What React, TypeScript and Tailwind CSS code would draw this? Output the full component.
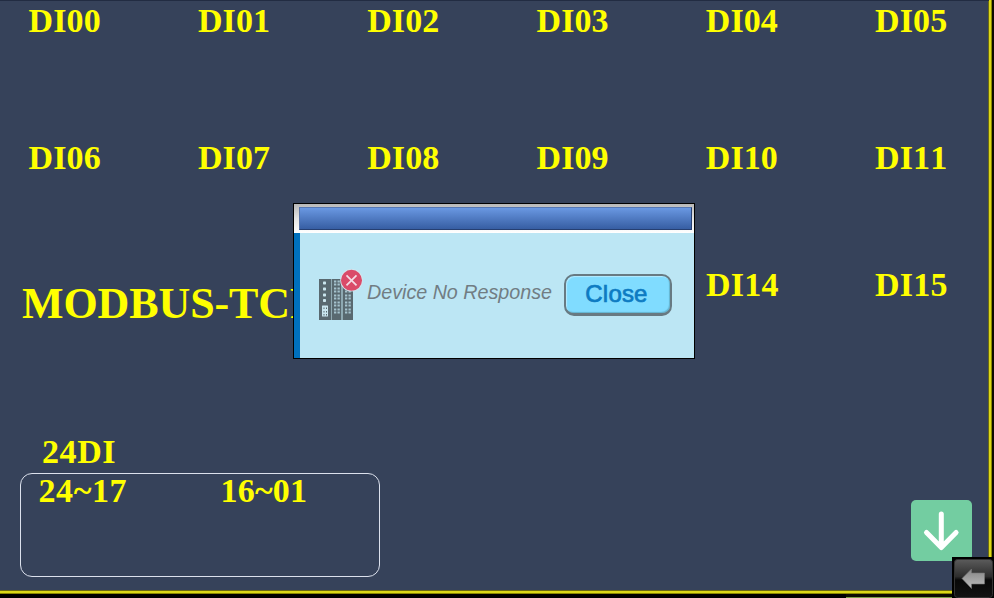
const serif = "font-['Liberation_Serif',serif] font-bold text-[#ffff00] whitespace-nowrap [font-kerning:none]";

function Label({ text, className = '' }: { text: string; className?: string }) {
  return <div className={`${serif} text-[34px] leading-[34px] ${className}`}>{text}</div>;
}

function LabelRow({ labels }: { labels: string[] }) {
  return (
    <div className="grid grid-cols-[repeat(6,169.3px)] pl-[28.6px] h-[34px] tracking-[0.1px]">
      {labels.map((label) => (
        <Label key={label} text={label} />
      ))}
    </div>
  );
}

function DeviceIcon() {
  const rows = [0, 1, 2, 3, 4];
  return (
    <svg width="46" height="54" viewBox="0 0 46 54" className="shrink-0">
      <path d="M2 11h12v41H2zM15 11h9.5v41H15zM26 11h10v41H26z" fill="#596970" />
      <path d="M14 11h1v41h-1zM24.5 11h1.5v41h-1.5z" fill="#8fa9b2" />
      {[13.5, 19.5, 25.5, 31].map((y) => (
        <rect key={y} x="6" y={y} width="3" height="3" rx=".7" fill="#cbe6ee" />
      ))}
      <rect x="5" y="37.500" width="6" height="11" rx=".5" fill="#c9e6ef" />
      <path d="M6.500 39.500h1v1.500h-1zM9 39.500h1v1.500H9zM6.500 43h1v1.500h-1zM9 43h1v1.500H9zM6.500 46h1v1.500h-1zM9 46h1v1.500H9z" fill="#596970" />
      {rows.map((r) => (
        <path
          key={r}
          d={`M17 ${12.5 + r * 7}h2.300v5h-2.300zM20.500 ${12.5 + r * 7}h2.300v5h-2.300zM28 ${12.5 + r * 7}h2.300v5h-2.300zM31.500 ${12.5 + r * 7}h2.300v5h-2.300z`}
          fill="#a6c3ce"
        />
      ))}
      {rows.map((r) => (
        <path key={r} d={`M17 ${14.500 + r * 7}h6v1h-6zM28 ${14.500 + r * 7}h6v1h-6z`} fill="#596970" />
      ))}
      <circle cx="34.500" cy="12.300" r="11.300" fill="#d5e5ed" />
      <circle cx="34.500" cy="12.300" r="10.500" fill="#da4b69" />
      <path d="M29.500 7.300l10 10M39.500 7.300l-10 10" stroke="#f4dce5" strokeWidth="1.700" />
    </svg>
  );
}

function Dialog() {
  return (
    <div className="absolute left-[293px] top-[203px] w-[402px] h-[156px] border border-black bg-white flex flex-col">
      <div className="h-[29px] pt-[3px] pl-[5px] pr-[2px] pb-[3px] bg-linear-to-b from-[#b8b8b8] via-[#e4e4e4] to-white">
        <div className="h-[23px] bg-linear-to-b from-[#6a98e2] to-[#375ea3] border border-t-[#5578b5] border-l-[#5874aa] border-b-[#263f72] border-r-[#263f72]" />
      </div>
      <div className="flex-1 bg-[#bce6f4] border-l-6 border-[#0070bd] flex items-start">
        <div className="pt-[35px] pl-[17px]">
          <DeviceIcon />
        </div>
        <div className="mt-[47px] ml-[4px] w-[197px] font-['Liberation_Sans',sans-serif] italic text-[19.700px] leading-[24px] text-[#717d83] whitespace-nowrap">
          Device No Response
        </div>
        <button className="mt-[41px] w-[108px] h-[42px] rounded-[10px] border-2 border-[#687a82] border-b-3 bg-[#80dcff] shadow-[inset_1px_1px_1px_#b4eaff,inset_-1px_-1px_1px_#63b4d0] pr-[3px] pb-[2px] font-['Liberation_Sans',sans-serif] text-[24px] leading-[34px] tracking-[0.2px] text-[#0d7bc2] [-webkit-text-stroke:0.700px_#0d7bc2]">
          Close
        </button>
      </div>
    </div>
  );
}

function ScrollDownButton() {
  return (
    <button className="absolute left-[911px] top-[500px] w-[61px] h-[61px] rounded-[5px] bg-[#73cda1]">
      <svg width="61" height="61" viewBox="0 0 61 61" fill="none" stroke="white" strokeWidth="5" strokeLinecap="round" strokeLinejoin="round">
        <path d="M30.300 14v33M15.500 32.500l14.800 15 14.800-15" />
      </svg>
    </button>
  );
}

function BackButton() {
  return (
    <button className="absolute left-[952px] top-[557px] w-[42px] h-[41px] bg-black pt-[2px] pl-[2px]">
      <svg width="40" height="39" viewBox="0 0 40 39">
        <defs>
          <linearGradient id="face" x2="0" y2="1">
            <stop offset="0" stopColor="#5b5b5b" />
            <stop offset=".45" stopColor="#2d2d2d" />
            <stop offset=".54" stopColor="#080808" />
            <stop offset="1" stopColor="#121212" />
          </linearGradient>
          <linearGradient id="arrow" x2="0" y2="1">
            <stop offset="0" stopColor="#858585" />
            <stop offset="1" stopColor="#bdbdbd" />
          </linearGradient>
        </defs>
        <rect x=".5" y=".5" width="38" height="38" rx="3" fill="url(#face)" stroke="#333" />
        <path d="M8 19.500l9.500-9.500v4h13v11h-13v4.500z" fill="url(#arrow)" stroke="#777" strokeWidth=".6" />
      </svg>
    </button>
  );
}

export default function App() {
  return (
    <div className="relative w-[994px] h-[598px] overflow-hidden bg-[#0c0c02] flex flex-col">
      <div className="h-[594px] w-[992px] border-r border-b border-[#8a8800]">
        <div className="h-[593px] w-[991px] border-r-2 border-b-2 border-[#dcd818] bg-[#36425a] flex flex-col shadow-[inset_0_1px_0_#222c42,inset_-1px_-1px_0_#6d6b14]">
          <div className="pt-[4px]">
            <LabelRow labels={['DI00', 'DI01', 'DI02', 'DI03', 'DI04', 'DI05']} />
          </div>
          <div className="pt-[103px]">
            <LabelRow labels={['DI06', 'DI07', 'DI08', 'DI09', 'DI10', 'DI11']} />
          </div>
          <div className="pt-[93px] flex h-[168px]">
            <div className={`${serif} w-[684px] pl-[22px] pt-[11px] text-[44px] leading-[50px] tracking-[-0.100px]`}>MODBUS-TCP</div>
            <Label text="DI14" className="ml-[22px] w-[169px] tracking-[0.2px]" />
            <Label text="DI15" className="tracking-[0.2px]" />
          </div>
          <div className="pt-[92px] pl-[42px]">
            <Label text="24DI" className="tracking-[0.6px]" />
          </div>
          <div className="ml-[20px] mt-[4px] w-[360px] h-[104px] rounded-[12px] border border-[#dce1ed] flex pl-[17.500px] pt-0">
            <Label text="24~17" className="w-[182px] tracking-[0.6px]" />
            <Label text="16~01" className="tracking-[0.2px]" />
          </div>
        </div>
      </div>
      <div className="flex-1 flex">
        <div className="w-[846px] bg-black" />
        <div className="w-[148px] h-px mt-[3px] bg-[#7c9f49]" />
      </div>
      <Dialog />
      <ScrollDownButton />
      <BackButton />
    </div>
  );
}
